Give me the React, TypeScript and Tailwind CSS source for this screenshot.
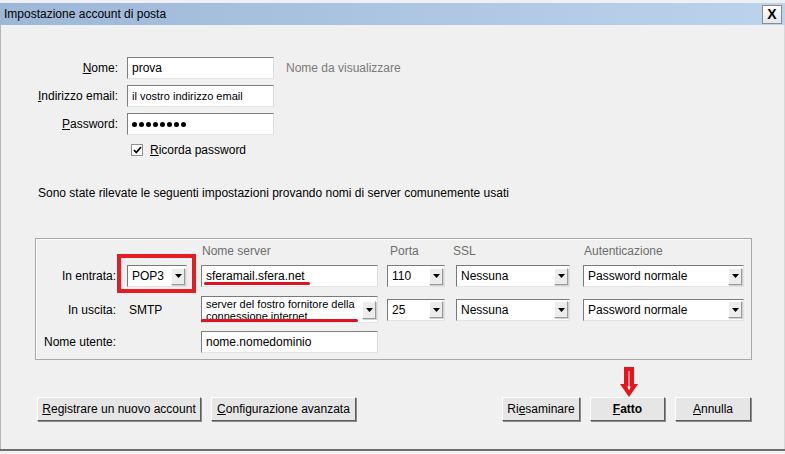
import React from "react";

const FONT = { fontFamily: '"Liberation Sans", Arial, sans-serif' };

function Tri() {
  return (
    <svg width="7" height="4" viewBox="0 0 7 4">
      <path d="M0 0 H7 L3.5 4 Z" fill="#000" />
    </svg>
  );
}

function DropBtn({ h = 17 }: { h?: number }) {
  return (
    <div
      className="w-[14px] flex items-center justify-center bg-[#ececec] border border-t-white border-l-white border-r-[#9a9a9a] border-b-[#9a9a9a] shadow-[1px_1px_0_#d0d0d0]"
      style={{ height: h }}
    >
      <Tri />
    </div>
  );
}

function Select({ w, text }: { w: number; text: string }) {
  return (
    <div
      className="h-[22px] bg-white border border-t-[#7a7a7a] border-l-[#7a7a7a] border-r-[#e3e3e3] border-b-[#e3e3e3] flex items-center justify-between pl-[4px] pr-[1px] text-[12px] text-black"
      style={{ width: w }}
    >
      <span>{text}</span>
      <DropBtn />
    </div>
  );
}

function Input({ w, children, small = false }: { w: number; children: React.ReactNode; small?: boolean }) {
  return (
    <div
      className={`h-[22px] bg-white border border-t-[#7f7f7f] border-l-[#7f7f7f] border-r-[#dcdcdc] border-b-[#e4e4e4] flex items-center pl-[4px] text-black ${small ? "text-[11px]" : "text-[12px]"}`}
      style={{ width: w }}
    >
      {children}
    </div>
  );
}

function Btn({ w, children, bold = false }: { w: number; children: React.ReactNode; bold?: boolean }) {
  return (
    <div
      className={`h-[24px] flex items-center justify-center bg-[#e6e6e6] border border-t-white border-l-white border-r-[#5e5e5e] border-b-[#5e5e5e] shadow-[1px_1px_0_#8a8a8a] text-[12px] text-black ${bold ? "font-bold" : ""}`}
      style={{ width: w }}
    >
      {children}
    </div>
  );
}

export default function App() {
  return (
    <div className="w-[785px] h-[454px] bg-[#f0f0f0] flex flex-col overflow-hidden text-black" style={FONT}>
      {/* top sliver */}
      <div className="h-[3px] bg-[#eef0f3]" />
      {/* title bar */}
      <div className="h-[22px] flex items-center justify-between bg-gradient-to-r from-[#9db7d7] to-[#bcd3ec] pl-[4px] pr-[3px]">
        <span className="text-[12px]">Impostazione account di posta</span>
        <div className="w-[20px] h-[19px] flex items-center justify-center bg-gradient-to-b from-white to-[#e6e6e6] border border-[#8c8c8c] text-[14px] font-bold leading-none">
          X
        </div>
      </div>

      {/* body */}
      <div className="flex-1 flex flex-col border-l border-l-[#b5b5b5] border-r border-r-[#d8d8d8]">
        <div className="flex flex-col gap-[6px] pt-[32px]">
          <div className="flex items-center h-[22px]">
            <div className="w-[117px] text-right text-[12px]"><u>N</u>ome:</div>
            <div className="ml-[9px]"><Input w={147}>prova</Input></div>
            <div className="ml-[12px] text-[12px] text-[#7a7a7a]">Nome da visualizzare</div>
          </div>
          <div className="flex items-center h-[22px]">
            <div className="w-[117px] text-right text-[12px]"><u>I</u>ndirizzo email:</div>
            <div className="ml-[9px]"><Input w={147} small>il vostro indirizzo email</Input></div>
          </div>
          <div className="flex items-center h-[22px]">
            <div className="w-[117px] text-right text-[12px]"><u>P</u>assword:</div>
            <div className="ml-[9px]">
              <Input w={147}>
                <div className="flex gap-[2px]">
                  {[0, 1, 2, 3, 4, 5, 6, 7].map((i) => (
                    <span key={i} className="w-[5px] h-[5px] rounded-full bg-black" />
                  ))}
                </div>
              </Input>
            </div>
          </div>
        </div>
        <div className="flex items-center mt-[9px] h-[12px] ml-[130px]">
          <div className="w-[12px] h-[12px] bg-white border border-[#8f8f8f] flex items-center justify-center">
            <svg width="9" height="8" viewBox="0 0 9 8">
              <path d="M1 4 L3.3 6.5 L8 1" stroke="#000" strokeWidth="1.8" fill="none" />
            </svg>
          </div>
          <span className="ml-[7px] text-[12px]"><u>R</u>icorda password</span>
        </div>

        <div className="mt-[30px] ml-[37px] text-[12px] leading-[14px]">
          Sono state rilevate le seguenti impostazioni provando nomi di server comunemente usati
        </div>

        {/* group box */}
        <div className="mt-[38px] ml-[34px] w-[717px] border border-[#a8a8a8] shadow-[inset_1px_1px_0_#ffffff] flex flex-col pt-[4px] pb-[6px] text-[12px]">
          {/* headers */}
          <div className="flex h-[16px] items-center text-[#6d6d6d]">
            <div className="w-[165px]" />
            <div className="w-[186px] pl-[1px]">Nome server</div>
            <div className="w-[69px] pl-[3px]">Porta</div>
            <div className="w-[127px] -ml-[3px] pr-[-3px]">SSL</div>
            <div className="ml-[3px] pl-[1px]">Autenticazione</div>
          </div>
          {/* row 1 */}
          <div className="flex h-[22px] items-center mt-[6px]">
            <div className="w-[82px] text-right pr-[2px]">In entrata:</div>
            <div className="w-[83px] relative">
              <div className="ml-[9px]"><Select w={60} text="POP3" /></div>
              <div className="absolute left-[-1px] top-[-11px] w-[79px] h-[39px] border-[4px] border-[#e51c23]" />
            </div>
            <div className="w-[186px] relative">
              <Input w={177}>sferamail.sfera.net</Input>
              <div className="absolute left-[3px] top-[17px] w-[106px] h-[3px] rounded-full bg-[#e0121f]" />
            </div>
            <div className="w-[69px]"><Select w={58} text="110" /></div>
            <div className="w-[127px]"><Select w={114} text="Nessuna" /></div>
            <div><Select w={161} text="Password normale" /></div>
          </div>
          {/* row 2 */}
          <div className="flex h-[27px] items-center mt-[9px]">
            <div className="w-[82px] text-right pr-[2px]">In uscita:</div>
            <div className="w-[83px] pl-[11px]">SMTP</div>
            <div className="w-[186px] relative">
              <div className="w-[177px] h-[27px] bg-white border border-t-[#7a7a7a] border-l-[#7a7a7a] border-r-[#e3e3e3] border-b-[#e3e3e3] flex items-center justify-between pl-[4px] pr-[1px]">
                <div className="text-[11px] leading-[12px]">
                  <div>server del fostro fornitore della</div>
                  <div>connessione internet</div>
                </div>
                <DropBtn h={18} />
              </div>
              <div className="absolute left-[0px] top-[23px] w-[157px] h-[3px] rounded-full bg-[#e0121f]" />
            </div>
            <div className="w-[69px]"><Select w={58} text="25" /></div>
            <div className="w-[127px]"><Select w={114} text="Nessuna" /></div>
            <div><Select w={161} text="Password normale" /></div>
          </div>
          {/* row 3 */}
          <div className="flex h-[22px] items-center mt-[8px]">
            <div className="w-[165px] pl-[8px]">Nome utente:</div>
            <Input w={177}>nome.nomedominio</Input>
          </div>
        </div>

        {/* buttons */}
        <div className="flex mt-[37px] ml-[36px]">
          <Btn w={164}><span><u>R</u>egistrare un nuovo account</span></Btn>
          <div className="ml-[10px]"><Btn w={145}><span><u>C</u>onfigurazione avanzata</span></Btn></div>
          <div className="ml-[146px]"><Btn w={78}><span>Ri<u>e</u>saminare</span></Btn></div>
          <div className="ml-[10px] relative">
            <svg className="absolute left-[30px] top-[-30px]" width="18" height="30" viewBox="0 0 18 30">
              <path d="M4 0 H14 V17 H18 L9 30 L0 17 H4 Z" fill="#e8141c" />
              <path d="M9 4 V22" stroke="#fff" strokeWidth="1" />
              <path d="M7.3 19.5 L9 23.5 L10.7 19.5 Z" fill="#fff" />
            </svg>
            <Btn w={75} bold><span><u>F</u>atto</span></Btn>
          </div>
          <div className="ml-[10px]"><Btn w={76}><span><u>A</u>nnulla</span></Btn></div>
        </div>
      </div>

      {/* bottom edge */}
      <div className="h-[2px] bg-[#6e6e6e]" />
      <div className="h-[3px] bg-[#f0f0f0]" />
    </div>
  );
}
